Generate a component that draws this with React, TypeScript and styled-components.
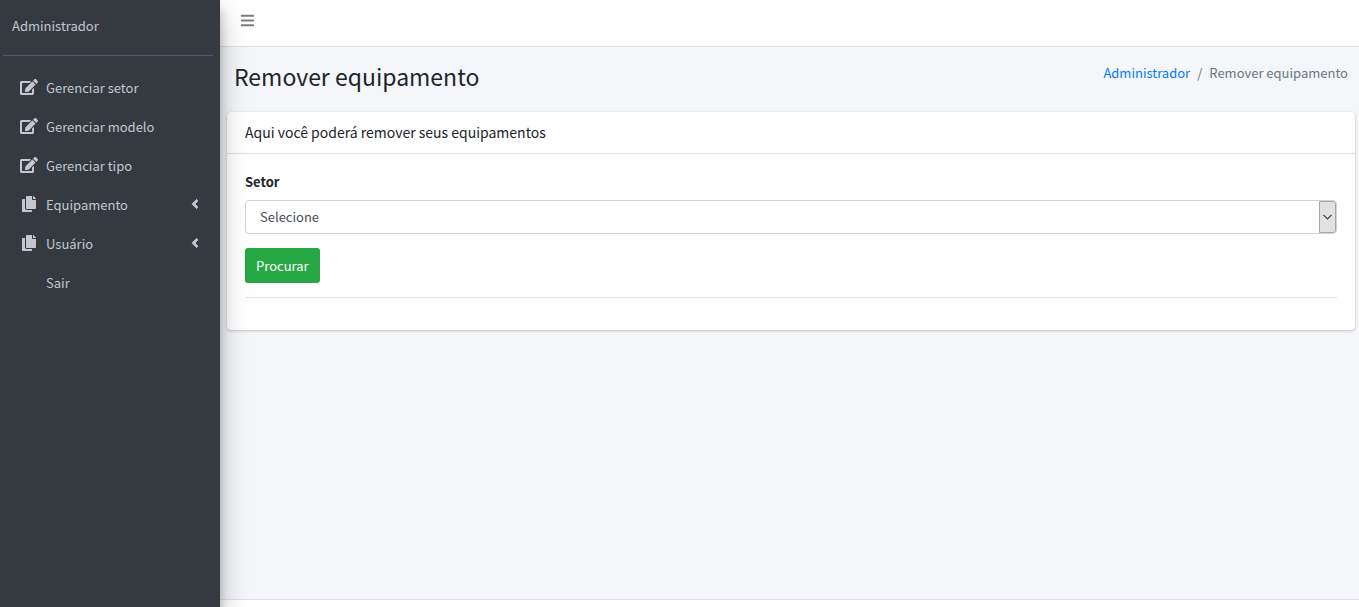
import React from "react";
import styled, { createGlobalStyle } from "styled-components";
import { FaAngleLeft, FaBars, FaCopy, FaEdit } from "react-icons/fa";

const GlobalStyle = createGlobalStyle`
  *, *::before, *::after { box-sizing: border-box; }
  body {
    margin: 0;
    color: #212529;
    background: #f4f6f9;
    font: 400 13px/20px "Noto Sans CJK SC", "Noto Sans", sans-serif;
  }
`;

const Page = styled.div`
  display: flex;
  min-height: 100vh;
`;

const Sidebar = styled.aside`
  position: relative;
  z-index: 2;
  flex: 0 0 220px;
  padding: 0 7px;
  background: #343a40;
  box-shadow: 0 14px 28px rgba(0, 0, 0, 0.25), 0 10px 10px rgba(0, 0, 0, 0.22);
`;

const UserPanel = styled.div`
  margin: 0 0 12px -4px;
  padding: 16px 9px 19px;
  border-bottom: 1px solid #4f5962;
`;

const SideLink = styled.a`
  color: #c2c7d0;
  text-decoration: none;
`;

const Menu = styled.ul`
  margin: 0;
  padding: 0;
  list-style: none;
`;

const MenuLink = styled(SideLink)`
  display: flex;
  align-items: center;
  height: 39px;
  padding: 0 11px 0 10px;
`;

const MenuIcon = styled.span`
  display: flex;
  justify-content: center;
  width: 24px;
  margin-right: 5px;
  padding-bottom: 2px;
  font-size: 16px;
`;

const MenuText = styled.span`
  flex: 1;
`;

const MenuArrow = styled(FaAngleLeft)`
  margin-bottom: 2px;
  font-size: 14px;
  stroke-width: 30px;
`;

const Main = styled.div`
  display: flex;
  flex: 1;
  flex-direction: column;
  min-width: 0;
`;

const Navbar = styled.header`
  display: flex;
  align-items: flex-start;
  height: 47px;
  padding: 13px 20px;
  background: #fff;
  border-bottom: 1px solid #dee2e6;
`;

const ToggleButton = styled.button`
  display: flex;
  padding: 0;
  border: 0;
  background: none;
  color: #7f7f7f;
  font-size: 15px;
`;

const Content = styled.main`
  flex: 1;
  padding: 13px 4px 0 7px;
`;

const ContentHeader = styled.div`
  display: flex;
  justify-content: space-between;
  padding: 0 7px;
  margin-bottom: 20px;
`;

const Title = styled.h1`
  margin: 0;
  font-size: 23px;
  font-weight: 400;
  line-height: 32px;
`;

const Breadcrumb = styled.ol`
  display: flex;
  gap: 7px;
  margin: 3px 0 0;
  padding: 0;
  list-style: none;
  color: #6c757d;
`;

const CrumbLink = styled.a`
  color: #007bff;
  text-decoration: none;
`;

const Card = styled.section`
  background: #fff;
  border-radius: 4px;
  box-shadow: 0 0 1px rgba(0, 0, 0, 0.125), 0 1px 3px rgba(0, 0, 0, 0.2);
`;

const CardHeader = styled.div`
  padding: 10px 18px;
  border-bottom: 1px solid #dfdfdf;
`;

const CardTitle = styled.h2`
  margin: 0;
  font-size: 14px;
  font-weight: 400;
  line-height: 21px;
`;

const CardBody = styled.form`
  padding: 18px 18px 32px;
`;

const Label = styled.label`
  display: block;
  margin-bottom: 8px;
  font-weight: 700;
`;

const SelectBox = styled.div`
  position: relative;
  margin-bottom: 14px;
`;

const Select = styled.select`
  display: block;
  width: 100%;
  height: 34px;
  padding: 0 30px 0 14px;
  border: 1px solid #ced4da;
  border-radius: 4px;
  background: #fff;
  color: #495057;
  font: inherit;
  appearance: none;
`;

const SelectArrow = styled.span`
  position: absolute;
  top: 1px;
  right: 1px;
  bottom: 1px;
  display: flex;
  align-items: center;
  justify-content: center;
  width: 17px;
  border: 1px solid #a6a6a6;
  border-radius: 0 3px 3px 0;
  background: #e1e1e1;
  pointer-events: none;
`;

const SubmitButton = styled.button`
  display: block;
  height: 35px;
  padding: 0 11px;
  border: 0;
  border-radius: 3px;
  background: #28a745;
  color: #fff;
  font: inherit;
`;

const Divider = styled.hr`
  margin: 14px 0 0;
  border: 0;
  border-top: 1px solid #e5e5e5;
`;

const Footer = styled.footer`
  height: 8px;
  background: #fff;
  border-top: 1px solid #dee2e6;
`;

const menu = [
  { text: "Gerenciar setor", icon: <FaEdit size={18} /> },
  { text: "Gerenciar modelo", icon: <FaEdit size={18} /> },
  { text: "Gerenciar tipo", icon: <FaEdit size={18} /> },
  { text: "Equipamento", icon: <FaCopy />, nested: true },
  { text: "Usuário", icon: <FaCopy />, nested: true },
  { text: "Sair" },
];

export default function App() {
  return (
    <>
      <GlobalStyle />
      <Page>
        <Sidebar>
          <UserPanel>
            <SideLink href="#">Administrador</SideLink>
          </UserPanel>
          <nav>
            <Menu>
              {menu.map((item) => (
                <li key={item.text}>
                  <MenuLink href="#">
                    <MenuIcon>{item.icon}</MenuIcon>
                    <MenuText>{item.text}</MenuText>
                    {item.nested && <MenuArrow />}
                  </MenuLink>
                </li>
              ))}
            </Menu>
          </nav>
        </Sidebar>
        <Main>
          <Navbar>
            <ToggleButton type="button" aria-label="Menu">
              <FaBars />
            </ToggleButton>
          </Navbar>
          <Content>
            <ContentHeader>
              <Title>Remover equipamento</Title>
              <Breadcrumb>
                <li><CrumbLink href="#">Administrador</CrumbLink></li>
                <li aria-hidden="true">/</li>
                <li>Remover equipamento</li>
              </Breadcrumb>
            </ContentHeader>
            <Card>
              <CardHeader>
                <CardTitle>Aqui você poderá remover seus equipamentos</CardTitle>
              </CardHeader>
              <CardBody>
                <Label htmlFor="setor">Setor</Label>
                <SelectBox>
                  <Select id="setor">
                    <option>Selecione</option>
                  </Select>
                  <SelectArrow>
                    <svg width="9" height="6" viewBox="0 0 9 6" fill="none" stroke="#404040" strokeWidth="1.2">
                      <path d="M.5 .8 4.5 4.8 8.5 .8" />
                    </svg>
                  </SelectArrow>
                </SelectBox>
                <SubmitButton type="button">Procurar</SubmitButton>
                <Divider />
              </CardBody>
            </Card>
          </Content>
          <Footer />
        </Main>
      </Page>
    </>
  );
}
